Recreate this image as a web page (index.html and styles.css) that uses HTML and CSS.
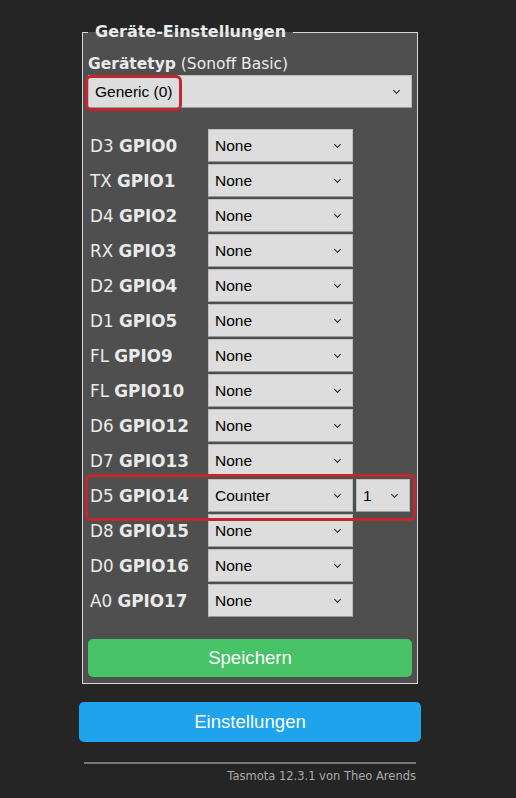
FILE: index.html
```html
<!DOCTYPE html>
<html>
<head>
<title>Geräte-Einstellungen</title>
<link rel="stylesheet" href="styles.css">
</head>
<body>

<div class="main">
  <fieldset>
    <legend>Geräte-Einstellungen</legend>
    <p class="devtype"><b>Gerätetyp</b> (Sonoff Basic)</p>
    <div class="sel wide"><select><option>Generic (0)</option></select></div>

    <div class="gpios">
      <div class="row"><span class="lbl">D3 <b>GPIO0</b></span><div class="sel"><select><option>None</option></select></div></div>
      <div class="row"><span class="lbl">TX <b>GPIO1</b></span><div class="sel"><select><option>None</option></select></div></div>
      <div class="row"><span class="lbl">D4 <b>GPIO2</b></span><div class="sel"><select><option>None</option></select></div></div>
      <div class="row"><span class="lbl">RX <b>GPIO3</b></span><div class="sel"><select><option>None</option></select></div></div>
      <div class="row"><span class="lbl">D2 <b>GPIO4</b></span><div class="sel"><select><option>None</option></select></div></div>
      <div class="row"><span class="lbl">D1 <b>GPIO5</b></span><div class="sel"><select><option>None</option></select></div></div>
      <div class="row"><span class="lbl">FL <b>GPIO9</b></span><div class="sel"><select><option>None</option></select></div></div>
      <div class="row"><span class="lbl">FL <b>GPIO10</b></span><div class="sel"><select><option>None</option></select></div></div>
      <div class="row"><span class="lbl">D6 <b>GPIO12</b></span><div class="sel"><select><option>None</option></select></div></div>
      <div class="row"><span class="lbl">D7 <b>GPIO13</b></span><div class="sel"><select><option>None</option></select></div></div>
      <div class="row"><span class="lbl">D5 <b>GPIO14</b></span><div class="sel"><select><option>Counter</option></select></div><div class="sel idx"><select><option>1</option></select></div></div>
      <div class="row"><span class="lbl">D8 <b>GPIO15</b></span><div class="sel"><select><option>None</option></select></div></div>
      <div class="row"><span class="lbl">D0 <b>GPIO16</b></span><div class="sel"><select><option>None</option></select></div></div>
      <div class="row"><span class="lbl">A0 <b>GPIO17</b></span><div class="sel"><select><option>None</option></select></div></div>
    </div>

    <button class="btn save">Speichern</button>
  </fieldset>

  <button class="btn">Einstellungen</button>

  <hr>
  <div class="footer">Tasmota 12.3.1 von Theo Arends</div>
</div>

<!-- red markers from the screenshot -->
<div class="mark mark-type"></div>
<div class="mark mark-counter"></div>

</body>
</html>
```

FILE: styles.css
```css
body {
    background: #252525;
    color: #eaeaea;
    font-family: "DejaVu Sans", Verdana, sans-serif;
    margin: 0;
    padding: 22px 16px 0 0;
    position: relative;
}

.main {
    width: 342px;
    margin: 0 auto;
}

fieldset {
    background: #4f4f4f;
    border: 1px solid #d8d8d8;
    margin: 0 3px;
    padding: 10px 5px 6px;
}

legend {
    font-weight: bold;
    font-size: 16px;
    line-height: 20px;
    padding: 0 7px 0 7px;
    margin-left: 0;
}

.devtype {
    margin: 0;
    font-size: 15.5px;
    line-height: 22px;
    padding-top: 1px;
}

.sel {
    position: relative;
    width: 145px;
    height: 33px;
}

.sel.wide {
    width: 324px;
}

.sel.idx {
    width: 54px;
    margin-left: 3px;
}

.sel::after {
    content: "";
    position: absolute;
    right: 13px;
    top: 13px;
    width: 4px;
    height: 4px;
    border-right: 1.5px solid #222;
    border-bottom: 1.5px solid #222;
    transform: rotate(45deg);
    pointer-events: none;
}

select {
    appearance: none;
    -webkit-appearance: none;
    width: 100%;
    height: 100%;
    box-sizing: border-box;
    background: #dddddd;
    color: #000;
    border: 1px solid #bdbdbd;
    border-bottom-color: #9a9a9a;
    border-radius: 0;
    padding: 0 0 0 6px;
    font-family: "Liberation Sans", Arial, sans-serif;
    font-size: 15.5px;
    margin: 0;
}

.gpios {
    display: flex;
    flex-direction: column;
    gap: 2px;
    margin-top: 21px;
}

.row {
    display: flex;
    align-items: center;
}

.lbl {
    width: 120px;
    padding-left: 2px;
    box-sizing: border-box;
    font-size: 16.8px;
    white-space: nowrap;
}

.btn {
    display: block;
    width: 100%;
    border: 0;
    border-radius: 5px;
    background: #1fa3ec;
    color: #faffff;
    font-family: "Liberation Sans", Arial, sans-serif;
    font-size: 18.6px;
    line-height: 40px;
    padding: 0;
    margin: 18px 0 0;
    cursor: pointer;
}

.btn.save {
    background: #47c266;
    margin-top: 22px;
    line-height: 38px;
}

hr {
    border: 0;
    border-top: 2px solid #777;
    margin: 20px 5px 0;
}

.footer {
    text-align: right;
    font-size: 11.5px;
    color: #aaa;
    margin: 5px 5px 0 0;
}

.mark {
    position: absolute;
    border: 3px solid #c4262d;
    border-radius: 6px;
    box-sizing: border-box;
}

.mark-type {
    left: 85px;
    top: 75px;
    width: 97px;
    height: 36px;
}

.mark-counter {
    left: 85px;
    top: 474px;
    width: 331px;
    height: 47px;
}
```
